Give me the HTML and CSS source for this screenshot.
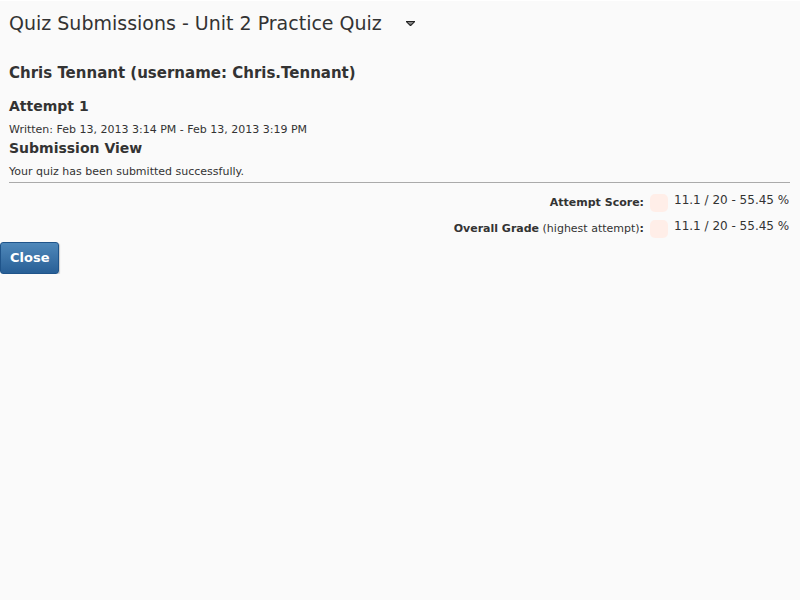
FILE: index.html
```html
<!DOCTYPE html>
<html lang="en">
<head>
<meta charset="utf-8">
<title>Quiz Submissions - Unit 2 Practice Quiz</title>
<link rel="stylesheet" href="styles.css">
</head>
<body>
<main class="content">
  <header class="page-header">
    <h1 class="page-title">Quiz Submissions - Unit 2 Practice Quiz</h1>
    <button class="menu-toggle" type="button" aria-label="Quiz actions">
      <svg class="menu-icon" width="9" height="5" viewBox="0 0 9 5"><path d="M0 0h9v1L5 5H4L0 1z" fill="#222"/><path d="M1.500 1h6L5 3.500H4z" fill="#888"/></svg>
    </button>
  </header>
  <h2 class="heading student">Chris Tennant (username: Chris.Tennant)</h2>
  <h2 class="heading">Attempt 1</h2>
  <p class="text">Written: Feb 13, 2013 3:14 PM - Feb 13, 2013 3:19 PM</p>
  <h2 class="heading">Submission View</h2>
  <p class="text">Your quiz has been submitted successfully.</p>
  <table class="scores">
    <tr>
      <th class="score-label" scope="row"><b>Attempt Score:</b></th>
      <td class="swatch-cell"><span class="swatch"></span></td>
      <td class="score">11.1 / 20 - 55.45 %</td>
    </tr>
    <tr>
      <th class="score-label" scope="row"><b>Overall Grade</b> (highest attempt)<b>:</b></th>
      <td class="swatch-cell"><span class="swatch"></span></td>
      <td class="score">11.1 / 20 - 55.45 %</td>
    </tr>
  </table>
</main>
<button class="close" type="button">Close</button>
</body>
</html>
```

FILE: styles.css
```css
body {
  margin: 0;
  border-top: 1px solid #fff;
  background: #fafafa;
  color: #333;
  font: 11px/16px "DejaVu Sans", Verdana, sans-serif;
}

.content {
  padding: 7px 10px 0 9px;
}

.page-header {
  display: flex;
  align-items: center;
  gap: 24px;
  margin-bottom: 24px;
}

.page-title {
  margin: 0;
  font-size: 19px;
  font-weight: normal;
  line-height: 30px;
}

.menu-toggle {
  display: flex;
  padding: 0;
  border: 0;
  background: none;
}

.heading {
  margin: 0;
  font-size: 14px;
  line-height: 22px;
}

.student {
  margin-bottom: 11px;
  font-size: 15px;
}

.text {
  margin: 6px 0 0;
  line-height: 14px;
}

.scores {
  width: 100%;
  margin-top: 3px;
  padding-top: 7px;
  border-top: 1px solid #aaa;
  border-spacing: 0;
}

.scores th,
.scores td {
  height: 26px;
  padding: 0;
}

.score-label {
  text-align: right;
  font-weight: normal;
}

.swatch-cell {
  width: 30px;
}

.swatch {
  display: block;
  width: 18px;
  height: 18px;
  margin: 0 auto;
  border-radius: 5px;
  background: #ffeee8;
}

.score {
  width: 116px;
  font-size: 12px;
  line-height: 20px;
  vertical-align: top;
  white-space: nowrap;
}

.close {
  display: block;
  height: 32px;
  padding: 0 9px;
  border: 1px solid #1f548a;
  border-radius: 3px;
  background: linear-gradient(#4f88ba, #285f96);
  box-shadow: 1px 1px 1px #ccc;
  color: #fff;
  font: bold 13px/16px "DejaVu Sans", Verdana, sans-serif;
}
```
